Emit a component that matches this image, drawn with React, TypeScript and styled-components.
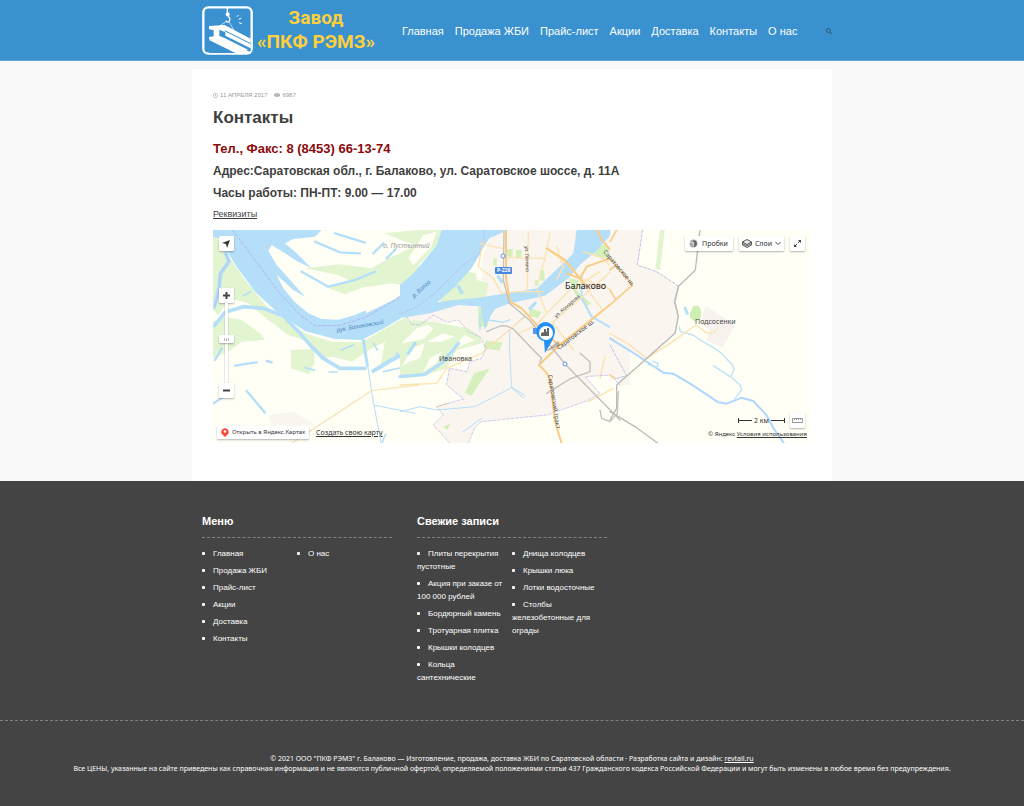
import React, { useState } from "react";
import styled, { createGlobalStyle } from "styled-components";
import { FaSearch, FaEye, FaRegClock } from "react-icons/fa";

const GlobalStyle = createGlobalStyle`
  * { box-sizing: border-box; }
  body {
    margin: 0;
    background: #f9f9f9;
    color: #3f3f3f;
    font-family: "Liberation Sans", Arial, sans-serif;
  }
  a { color: inherit; }
  button { font: inherit; color: inherit; cursor: pointer; }
`;

const Header = styled.header`
  background: #3991d0;
  border-bottom: 1px solid #60a8da;
`;

const HeaderInner = styled.div`
  max-width: 620px;
  height: 60px;
  margin: 0 auto;
  display: flex;
  align-items: center;
`;

const Logo = styled.a`
  display: flex;
  flex: none;
  align-items: center;
  gap: 4px;
  color: #ffd03a;
  text-decoration: none;
  svg { flex: none; }
`;

const LogoText = styled.span`
  font: 700 19px/24px Roboto, sans-serif;
  text-align: center;
  white-space: nowrap;
`;

const Nav = styled.nav`
  display: flex;
  gap: 11px;
  margin: 2px 0 0 27px;
  white-space: nowrap;
`;

const NavLink = styled.a`
  color: #fff;
  font-size: 11px;
  line-height: 16px;
  text-decoration: none;
`;

const SearchButton = styled.button`
  display: flex;
  margin: 2px -10px 0 auto;
  padding: 0;
  border: 0;
  background: none;
  color: #2c5c80;
`;

const Article = styled.main`
  max-width: 640px;
  margin: 8px auto 0;
  padding: 22px 21px 38px;
  background: #fff;
`;

const Meta = styled.div`
  display: flex;
  align-items: center;
  gap: 7px;
  height: 8px;
  font-size: 6px;
  line-height: 8px;
  color: #999;
  text-transform: uppercase;
`;

const MetaItem = styled.span`
  display: flex;
  align-items: center;
  gap: 2px;
`;

const Title = styled.h1`
  margin: 7px 0 0;
  font-size: 17px;
  line-height: 24px;
`;

const InfoLine = styled.h2<{ $accent?: boolean }>`
  margin: ${(p) => (p.$accent ? "10px 0 4px" : "0 0 4px")};
  font-size: ${(p) => (p.$accent ? "13px" : "12px")};
  line-height: 18px;
  color: ${(p) => (p.$accent ? "#8b0a0a" : "inherit")};
`;

const Details = styled.a`
  display: block;
  width: fit-content;
  margin: 6px 0 10px;
  font-size: 9px;
  line-height: 12px;
`;

const MapFrame = styled.section`
  position: relative;
  height: 213px;
  overflow: hidden;
  background: #fffff6;
  color: #333;
  font-family: "Noto Sans", sans-serif;
  font-size: 7px;
  line-height: 9px;
`;

const MapSvg = styled.svg`
  display: block;
  width: 100%;
  height: 100%;
  font-family: "Noto Sans", sans-serif;
`;

const MapButton = styled.button`
  display: flex;
  align-items: center;
  justify-content: center;
  min-width: 15px;
  height: 15px;
  padding: 0;
  border: 0;
  border-radius: 1px;
  background: #fff;
  box-shadow: 0 1px 2px rgba(0, 0, 0, 0.3);
`;

const WideButton = styled(MapButton)<{ $roomy?: boolean }>`
  gap: ${(p) => (p.$roomy ? "4px" : "3px")};
  padding: ${(p) => (p.$roomy ? "0 5px 0 4px" : "0 3px")};
`;

const Geolocate = styled.div`
  position: absolute;
  left: 6px;
  top: 6px;
`;

const Toolbar = styled.div`
  position: absolute;
  right: 6px;
  top: 6px;
  display: flex;
  gap: 6px;
`;

const ZoomPanel = styled.div`
  position: absolute;
  left: 6px;
  top: 58px;
  width: 15px;
  display: flex;
  flex-direction: column;
  align-items: center;
`;

const ZoomRange = styled.input`
  appearance: none;
  writing-mode: vertical-lr;
  direction: rtl;
  width: 15px;
  height: 80px;
  margin: 0;
  background: transparent;
  &::-webkit-slider-runnable-track {
    width: 3px;
    background: #fff;
    box-shadow: 0 0 1px rgba(0, 0, 0, 0.8);
  }
  &::-webkit-slider-thumb {
    appearance: none;
    width: 15px;
    height: 8px;
    margin-left: -6px;
    border-radius: 1px;
    background: repeating-linear-gradient(90deg, #bbb 0 1px, #fff 1px 2px) center / 5px 3px no-repeat, #fff;
    box-shadow: 0 1px 2px rgba(0, 0, 0, 0.3);
  }
`;

const MapLinks = styled.div`
  position: absolute;
  left: 4px;
  bottom: 4px;
  display: flex;
  align-items: center;
  gap: 7px;
  white-space: nowrap;
`;

const OpenLink = styled.a`
  display: flex;
  align-items: center;
  gap: 3px;
  height: 13px;
  padding: 0 4px;
  border-radius: 1px;
  background: #fff;
  box-shadow: 0 1px 2px rgba(0, 0, 0, 0.3);
  font-size: 6px;
  text-decoration: none;
`;

const ScaleRow = styled.div`
  position: absolute;
  right: 6px;
  bottom: 15px;
  display: flex;
  align-items: center;
  gap: 5px;
`;

const ScaleBar = styled.div`
  display: flex;
  align-items: center;
  gap: 2px;
  width: 47px;
  height: 5px;
  border: solid #333;
  border-width: 0 1px;
  white-space: nowrap;
  &::before, &::after {
    content: "";
    flex: 1;
    height: 1px;
    background: #333;
  }
`;

const Copyright = styled.div`
  position: absolute;
  right: 4px;
  bottom: 4px;
  font-size: 6px;
`;

const Footer = styled.footer`
  background: #444;
  color: #fff;
`;

const Widgets = styled.div`
  max-width: 620px;
  margin: 0 auto;
  padding: 33px 0 32px;
  display: grid;
  grid-template-columns: repeat(auto-fill, 190px);
  gap: 25px;
`;

const WidgetTitle = styled.h3`
  margin: 0 0 9px;
  padding-bottom: 8px;
  border-bottom: 1px dashed #808080;
  font-size: 11px;
  line-height: 15px;
`;

const List = styled.ul`
  columns: 2;
  column-gap: 0;
  margin: 0;
  padding: 0;
  list-style: none;
`;

const Item = styled.li<{ $newColumn?: boolean }>`
  margin-bottom: 4px;
  padding-right: 7px;
  font-size: 8px;
  line-height: 13px;
  break-inside: avoid;
  break-before: ${(p) => (p.$newColumn ? "column" : "auto")};
  &::before {
    content: "";
    display: inline-block;
    width: 3px;
    height: 3px;
    margin-right: 8px;
    border-radius: 1px;
    background: #fff;
    vertical-align: 1px;
  }
  a { text-decoration: none; }
`;

const Legal = styled.div`
  padding: 33px 16px 32px;
  border-top: 1px dashed #808080;
  font-family: "Noto Sans", sans-serif;
  font-size: 7px;
  line-height: 10px;
  text-align: center;
  p { margin: 0; }
`;

const LogoMark = () => (
  <svg width="51" height="49" viewBox="30 17 153 147" aria-hidden="true">
    <rect x="34" y="21" width="145" height="139" rx="15" fill="none" stroke="#fff" strokeWidth="7" />
    <path d="M106 22v17" stroke="#fff" strokeWidth="4" />
    <circle cx="107" cy="42" r="6" fill="#fff" />
    <path d="M107 47c6 4 8 10 5 15s-9 4-10-1" fill="none" stroke="#fff" strokeWidth="4" />
    <path d="M105 62L78 80M110 62l18 32" stroke="#fff" strokeWidth="2" />
    <path d="M51 77L98 74 176 115V146L131 157 51 117V110L65 108V89L51 87Z" fill="#fff" />
    <path d="M82 88V107L96 112 176 152V144L100 106V96Z" fill="#3991d0" />
    <path d="M98 91L176 130" stroke="#3991d0" strokeWidth="3" />
    <path d="M51 121L132 158H51Z" fill="#3991d0" />
    <path d="M51 119L82 112 176 156V160H135Z" fill="#fff" />
    <path d="M135 49l5-5M140 57l8-3M141 67l9 3" stroke="#fff" strokeWidth="3" />
  </svg>
);

const CityMap = () => (
  <MapSvg viewBox="0 0 598 213" preserveAspectRatio="xMidYMid slice" role="img" aria-label="Карта: Балаково">
    <rect width="598" height="213" fill="#fffff6" />

    {/* western islands, the main channel and its branches */}
    <g transform="scale(.33333) translate(-24 -15)" fill="none" strokeLinecap="round" strokeLinejoin="round">
      <g fill="#e2f4d0">
        <path d="M24 30L55 60 75 100 120 165 190 250 300 325 380 350 470 352 560 300 640 255V350L600 385 560 400 525 430 540 350 500 370 440 410 385 395 345 400 310 350 250 330 190 285 130 235 75 220 40 270 24 255z" />
        <path d="M60 275L110 285 165 325 180 345 110 350 70 380 24 400V290zM258 375L328 372V415L312 448 258 430z" />
        <path d="M300 130L400 118 500 130 560 95 585 85 640 60V175L590 180 560 175 470 188 420 208 360 185 440 170 400 150zM540 25L640 15V60L600 50z" />
      </g>
      <path d="M24 15H350L330 35 265 42 240 55 275 85 320 130 275 108 240 85 200 60 190 78 215 120 260 170 300 215 265 195 215 150 235 190 270 232 310 265 350 282 400 284 450 270 520 240 590 202 640 165V250L600 272 540 308 470 345 390 342 300 318 220 265 150 200 95 125 70 85 40 40 24 35z" fill="#b5dff9" />
      <path d="M480 255L545 222 600 170 640 145V165L575 220 485 264z" fill="#fffff6" />
      <g stroke="#b5dff9" fill="none">
        <path d="M62 85L72 110 47 145 42 190 28 245" strokeWidth="12" />
        <path d="M28 302L60 262 115 245 175 250 235 272 285 325 320 365 355 400 405 430H480" strokeWidth="11" />
        <path d="M475 346L487 421" strokeWidth="9" />
        <path d="M505 438L560 405 630 370" strokeWidth="12" />
        <path d="M290 140L370 185 450 165 510 140M330 50L405 82 465 85M390 25L480 53M505 85L535 55M545 100L570 75M560 265L540 290M30 405L50 370M125 498L180 563M25 535L50 518M90 422L155 412M185 408L200 412" strokeWidth="7" />
        <path d="M410 375L445 360M300 428L328 436M372 441H397M535 440L625 420M530 655L542 627M70 620L80 635M114 212L138 200M505 355L517 375M576 382V397" strokeWidth="5" />
        <path d="M488 420L503 520 528 653M505 540L630 565" strokeWidth="3" />
      </g>
      <path d="M190 570L265 560 330 600H200zM610 270L640 255V300L610 290z" fill="#faf5ef" />
      <path d="M260 655L350 595 500 497 640 480" stroke="#f9e4c0" strokeWidth="4" />
      <path d="M82 15L150 105 220 200 285 270 330 302H400L480 278 555 235 640 175" stroke="#b4b4ec" strokeWidth="3" strokeDasharray="9 6" />
      <path d="M62 85L72 110 45 145 42 190 30 245" stroke="#b4b4ec" strokeWidth="2" />
    </g>

    {/* city, its streets and the canal */}
    <g transform="scale(.33333) translate(561 -15)" fill="none" strokeLinecap="round" strokeLinejoin="round">
      <path d="M325 15H690V480H660L630 450 555 455 600 505 560 528 440 570 245 590 225 605 205 656H150L100 600 130 570 110 545 190 522 140 480 148 430 200 440 210 410 245 400 258 370 240 335 205 320 170 285 60 300 20 280 170 240 240 250 250 90 270 40z" fill="#faf5ef" />
      <path d="M50 15H125L110 60 70 105 30 150 0 182V85L50 60z" fill="#e2f4d0" />
      <path d="M25 100L60 47 70 30 110 20 92 68 40 120z" fill="#fffff6" />
      <path d="M105 225L180 160 195 138 228 145 230 165 265 175 258 215 245 240 170 240zM0 305L40 285 105 292 205 310 240 335 245 355 170 375 140 430 60 455 0 460z" fill="#e2f4d0" />
      <path d="M235 245L275 255 262 305H235zM258 348L308 352 298 377 250 370zM222 445L270 430 235 480 215 512 195 504zM390 250L425 260 415 278 385 273zM590 60H622L627 90 612 102 582 90zM505 160L537 165 530 197 575 237 560 242 525 207zM318 72H338V97L316 92zM348 75H365V100H348zM280 100H290V122H280zM420 135H433V167H420zM405 165H416V182H405zM130 605L152 595 142 615z" fill="#d5f0bc" />
      <path d="M125 15H325L268 40 245 78 215 130 165 185 112 232 160 225 225 220 330 203 412 190 455 147 487 118 520 85 530 15H642L624 40 585 82 545 115 505 160 435 212 380 224 330 235 285 252 265 285 255 315 245 270 243 245 175 240 93 264 30 275 0 278V180L35 150 70 110 110 60z" fill="#b5dff9" />
      <path d="M5 355L50 310 85 300 100 312 70 342 30 350zM80 350L130 325 165 335 120 352zM140 385L195 330 225 345 160 372zM5 425L35 370 75 355 60 400 25 412zM70 440L90 400 125 380 110 415z" fill="#fffff6" />
      <g stroke="#b5dff9">
        <path d="M0 455L75 448 130 410 175 355M45 355L25 385M155 145V175M175 185L185 203M295 155L305 170M390 250L405 235" strokeWidth="10" />
        <path d="M265 285L310 292 330 284M240 315V270" strokeWidth="4" />
        <path d="M545 155V220L575 275 645 315 680 350" strokeWidth="6" />
        <path d="M375 270L330 315 328 365 335 488 372 520M338 488L375 512M245 580L190 620M0 560L60 545 110 555 225 545 335 488" strokeWidth="3" />
      </g>
      <g stroke="#fce3b0" strokeWidth="4">
        <path d="M250 45L235 125 280 160 305 205 350 200H430M240 55L305 70M320 98L435 100M385 20L382 195M450 25L435 100 415 170M440 70L500 115 540 160 640 195M550 80L610 100 655 150M470 65L490 125 470 165M410 190L440 265 410 300 355 325M440 265L510 195M455 290L520 375M540 165L605 250M530 185L600 140M375 275L245 385 140 430 110 475 0 480M110 545L145 535" />
        <path d="M655 120L530 230 460 290M615 395L600 460 M565 530L640 490" />
      </g>
      <g stroke="#f9cc83" strokeWidth="6">
        <path d="M318 15V160L330 230 365 250 420 310 470 355M440 70L495 105 560 185M660 215L585 275 485 355 417 420 437 440 450 460 465 590 485 655M590 15L610 50 660 110" />
        <path d="M500 145L540 160 560 125 630 100 660 60" />
      </g>
      <g stroke="#c3c0bc" strokeWidth="4">
        <path d="M312 20L310 165 328 235 388 285 498 420 660 585M260 320L300 303H320L340 312 405 380 425 400 420 412M540 385L570 410V440L510 462 440 505M600 555L605 580 630 590 652 565 655 500" />
      </g>
      <path d="M255 15L250 50 235 90 190 120 120 190 60 240 0 270M20 275L35 298 60 300 100 270 140 292 175 285 205 320 240 335 258 370 245 400 210 410 200 440 148 430 140 480 190 522 110 545 130 570 100 600 150 655M205 655L225 605 245 590 440 570 560 528 600 505 555 455 630 450 660 480" stroke="#b9b4ec" strokeWidth="2" strokeDasharray="9 5" />
    </g>

    {/* eastern outskirts */}
    <g transform="scale(.33333) translate(1191 -15)" fill="none" strokeLinecap="round" strokeLinejoin="round">
      <path d="M0 15h98L82 120l58 20 65 43-13 47 13 45-10 50-90 78L0 340zM0 360l50 92-35 10L0 470z" fill="#faf5ef" />
      <path d="M285 242l55 35 35 25-37 65-50-20 12-30-25-20z" fill="#f7f2ed" />
      <path d="M150 15h14l-14 120-14-2z" fill="#e2f4d0" />
      <path d="M240 265l10-22 15 0 8 12v25l-18 10-15-12z" fill="#cdefb4" />
      <path d="M220 248l8-4 9 24-8 2z" fill="#b5dff9" />
      <path d="M98 15L82 120l58 20 65 43-13 47 13 45-10 50-90 78M0 360l50 92-35 10" stroke="#c5bfe9" strokeWidth="3" strokeDasharray="9 5" />
      <path d="M0 340l80 50 80 53 30 3 60 36 75 50 25 4 25-10 20-8 35 10 40 43 20 38 38 55" stroke="#b0d6ff" strokeWidth="6" />
      <path d="M375 520l20-25-5-15-28-25 10-20-5-15-33-35-20-15-35-20-30-20-38-10-3-15M310 422l50 33M127 408l18 8-5 12-25-10" stroke="#bce4f6" strokeWidth="4" />
      <path d="M0 325L60 360 110 400 180 355 258 300 292 325 312 322 323 308" stroke="#fce3b0" strokeWidth="4" />
      <path d="M20 15L0 50M0 240L68 180 0 100M0 195L15 220M0 135L18 120M0 450L14 459" stroke="#f9cf8a" strokeWidth="5" />
      <path d="M270 15L256 135 238 153 206 183 195 230 205 275 195 325 105 405 20 480V550L0 585M0 560L80 608 145 656" stroke="#bcbab6" strokeWidth="4" />
    </g>

    <g fill="#474747" fontSize="7">
      <text x="170" y="18" fontStyle="italic" fill="#999">о. Пустынный</text>
      <text x="226" y="131">Ивановка</text>
      <text x="352" y="59" fontSize="9" fill="#222">Балаково</text>
      <text x="482" y="94">Подсосенки</text>
      <g fontStyle="italic" fill="#4b82bd" fontSize="6">
        <text transform="translate(201 68) rotate(-42)">р. Волга</text>
        <text transform="translate(124 102) rotate(-10)">рук. Балаковский</text>
      </g>
      <g fontSize="6">
        <text transform="translate(312 16) rotate(88)" fontSize="5">ул. Ленина</text>
        <text transform="translate(343 88) rotate(-41)" fontSize="5">ул. Комарова</text>
        <text transform="translate(346 120) rotate(-38)">Саратовское ш.</text>
        <text transform="translate(390 22) rotate(50)">Саратовское ш.</text>
        <text transform="translate(335 145) rotate(81)">Саратовский тракт</text>
      </g>
    </g>
    <rect x="282" y="37" width="17" height="7" rx="1" fill="#4887df" />
    <text x="284" y="42" fontSize="5" fontWeight="700" fill="#fff">Р-228</text>
    <g fill="#fff" stroke="#5a94ee" strokeWidth="1">
      <circle cx="290" cy="26" r="2" />
      <circle cx="352" cy="134" r="2" />
    </g>
    <rect x="320" y="98" width="4" height="6" fill="#5a94ee" />
    <path d="M333 121l12-10 3 4-13 6z" fill="#8b7b60" opacity=".5" />
    <path d="M332 123l-1-12a9.500 9.500 0 1 1 10-5c-2 6-5 10-9 17z" fill="#2392f5" />
    <circle cx="333" cy="103" r="7" fill="#fff" />
    <path d="M328 106v-3l3-1v-3h2v3l1-1v-3h2v8z" fill="#666" />
  </MapSvg>
);

const menu = ["Главная", "Продажа ЖБИ", "Прайс-лист", "Акции", "Доставка", "Контакты", "О нас"];

const posts = [
  "Плиты перекрытия пустотные",
  "Акция при заказе от 100 000 рублей",
  "Бордюрный камень",
  "Тротуарная плитка",
  "Крышки колодцев",
  "Кольца сантехнические",
  "Днища колодцев",
  "Крышки люка",
  "Лотки водосточные",
  "Столбы железобетонные для ограды",
];

const Widget = ({ title, items }: { title: string; items: string[] }) => (
  <section>
    <WidgetTitle>{title}</WidgetTitle>
    <List>
      {items.map((item, i) => (
        <Item key={item} $newColumn={i === 6}>
          <a href="#">{item}</a>
        </Item>
      ))}
    </List>
  </section>
);

const ContactMap = () => {
  const [zoom, setZoom] = useState(11);
  return (
    <MapFrame>
      <CityMap />
      <Geolocate>
        <MapButton aria-label="Моё местоположение">
          <svg width="9" height="9" viewBox="0 0 9 9"><path d="M0 4L8 1 5 9 4 5z" fill="#333" /></svg>
        </MapButton>
      </Geolocate>
      <ZoomPanel>
        <MapButton aria-label="Приблизить" onClick={() => setZoom(zoom + 1)}>
          <svg width="9" height="9" viewBox="0 0 9 9"><path d="M4.500 1v7M1 4.500h7" stroke="#444" strokeWidth="2" /></svg>
        </MapButton>
        <ZoomRange
          type="range"
          min={0}
          max={20}
          value={zoom}
          aria-label="Масштаб"
          onChange={(e) => setZoom(Number(e.target.value))}
        />
        <MapButton aria-label="Отдалить" onClick={() => setZoom(zoom - 1)}>
          <svg width="9" height="9" viewBox="0 0 9 9"><path d="M1 4.500h7" stroke="#444" strokeWidth="2" /></svg>
        </MapButton>
      </ZoomPanel>
      <Toolbar>
        <WideButton $roomy>
          <svg width="9" height="9" viewBox="0 0 9 9">
            <circle cx="4.500" cy="4.500" r="4" fill="#aaa" />
            <path d="M4 1l3 1 1 3-2 3-3 0 2-3z" fill="#666" />
            <path d="M1 3l4 1-1 4" fill="none" stroke="#ddd" />
          </svg>
          Пробки
        </WideButton>
        <WideButton>
          <svg width="10" height="9" viewBox="0 0 10 9" fill="none" stroke="#555">
            <path d="M0.500 3L5 0.500 9.500 3 5 5.500z" fill="#eee" />
            <path d="M0.500 3v3L5 8.500 9.500 6V3M0.500 4.500L5 7l4.500-2.500" />
          </svg>
          Слои
          <svg width="6" height="5" viewBox="0 0 6 5"><path d="M0.500 1L3 3.500 5.500 1" fill="none" stroke="#444" /></svg>
        </WideButton>
        <MapButton aria-label="На весь экран">
          <svg width="9" height="9" viewBox="0 0 9 9" fill="#444" stroke="#444">
            <path d="M5 1h3v3zM1 5v3h3z" stroke="none" />
            <path d="M7 2L5 4M2 7l2-2" />
          </svg>
        </MapButton>
      </Toolbar>
      <MapLinks>
        <OpenLink href="#">
          <svg width="8" height="9" viewBox="0 0 8 9">
            <path d="M4 9L1 6A3.600 3.600 0 1 1 7 6z" fill="#f43" />
            <circle cx="4" cy="3.500" r="1.300" fill="#fff" />
          </svg>
          Открыть в Яндекс.Картах
        </OpenLink>
        <a href="#">Создать свою карту</a>
      </MapLinks>
      <ScaleRow>
        <ScaleBar>2 км</ScaleBar>
        <MapButton aria-label="Линейка">
          <svg width="11" height="5" viewBox="0 0 11 5">
            <path d="M0.500 0.500h10v4H0.500zM2.500 0v2M4.500 0v2M6.500 0v2M8.500 0v2" fill="none" stroke="#999" />
          </svg>
        </MapButton>
      </ScaleRow>
      <Copyright>
        © Яндекс <a href="#">Условия использования</a>
      </Copyright>
    </MapFrame>
  );
};

export default function App() {
  return (
    <>
      <GlobalStyle />
      <Header>
        <HeaderInner>
          <Logo href="#">
            <LogoMark />
            <LogoText>
              Завод
              <br />
              «ПКФ РЭМЗ»
            </LogoText>
          </Logo>
          <Nav>
            {menu.map((item) => (
              <NavLink key={item} href="#">{item}</NavLink>
            ))}
          </Nav>
          <SearchButton aria-label="Поиск">
            <FaSearch size={6} />
          </SearchButton>
        </HeaderInner>
      </Header>
      <Article>
        <Meta>
          <MetaItem><FaRegClock size={5} /> 11 апреля 2017</MetaItem>
          <MetaItem><FaEye size={6} /> 6987</MetaItem>
        </Meta>
        <Title>Контакты</Title>
        <InfoLine $accent>Тел., Факс: 8 (8453) 66-13-74</InfoLine>
        <InfoLine>Адрес:Саратовская обл., г. Балаково, ул. Саратовское шоссе, д. 11А</InfoLine>
        <InfoLine>Часы работы: ПН-ПТ: 9.00 — 17.00</InfoLine>
        <Details href="#">Реквизиты</Details>
        <ContactMap />
      </Article>
      <Footer>
        <Widgets>
          <Widget title="Меню" items={menu} />
          <Widget title="Свежие записи" items={posts} />
        </Widgets>
        <Legal>
          <p>
            © 2021 ООО "ПКФ РЭМЗ" г. Балаково — Изготовление, продажа, доставка ЖБИ по Саратовской области · Разработка
            сайта и дизайн: <a href="#">revtail.ru</a>
          </p>
          <p>
            Все ЦЕНЫ, указанные на сайте приведены как справочная информация и не являются публичной офертой,
            определяемой положениями статьи 437 Гражданского кодекса Российской Федерации и могут быть изменены в любое
            время без предупреждения.
          </p>
        </Legal>
      </Footer>
    </>
  );
}
